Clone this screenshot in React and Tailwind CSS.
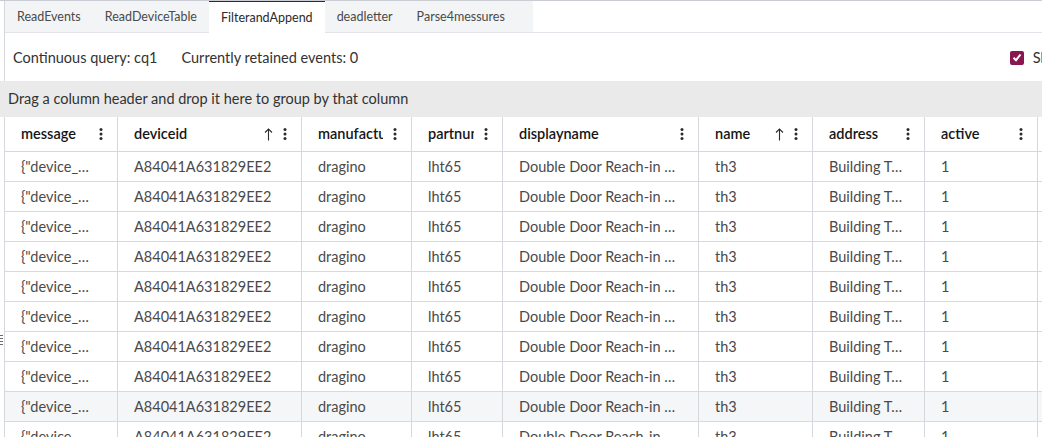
import React from "react";

const tabs = ["ReadEvents", "ReadDeviceTable", "FilterandAppend", "deadletter", "Parse4messures"];

const columns = [
  { key: "message", label: "message", w: "w-[113px]" },
  { key: "deviceid", label: "deviceid", w: "w-[184px]", sort: true },
  { key: "manufacturer", label: "manufacturer", w: "w-[110px]" },
  { key: "partnumber", label: "partnumber", w: "w-[91px]" },
  { key: "displayname", label: "displayname", w: "w-[196px]" },
  { key: "name", label: "name", w: "w-[114px]", sort: true },
  { key: "address", label: "address", w: "w-[112px]" },
  { key: "active", label: "active", w: "w-[113px]" },
];

const row = {
  message: "{\"device_…",
  deviceid: "A84041A631829EE2",
  manufacturer: "dragino",
  partnumber: "lht65",
  displayname: "Double Door Reach-in …",
  name: "th3",
  address: "Building T…",
  active: "1",
};

const rows = Array.from({ length: 10 }, () => row);

function Kebab() {
  return (
    <svg width="4" height="12" viewBox="0 0 4 12" className="shrink-0">
      <circle cx="2" cy="1.6" r="1.5" fill="#2b2b2b" />
      <circle cx="2" cy="6" r="1.5" fill="#2b2b2b" />
      <circle cx="2" cy="10.4" r="1.5" fill="#2b2b2b" />
    </svg>
  );
}

function ArrowUp() {
  return (
    <svg width="9" height="13" viewBox="0 0 9 13" className="shrink-0">
      <path d="M4.5 12.5V1M1 4.5L4.5 1L8 4.5" fill="none" stroke="#2b2b2b" strokeWidth="1.1" />
    </svg>
  );
}

export default function App() {
  return (
    <div className="relative w-[1042px] h-[437px] overflow-hidden bg-white text-[#323232] font-['Lato','Liberation_Sans',sans-serif] border-t border-[#c9cdd3]">
      {/* splitter grip */}
      <div className="absolute left-0 top-[334px] flex flex-col gap-[2px]">
        <div className="w-[3px] h-[1px] bg-[#6b6b6b]" />
        <div className="w-[3px] h-[1px] bg-[#6b6b6b]" />
        <div className="w-[3px] h-[1px] bg-[#6b6b6b]" />
        <div className="w-[3px] h-[1px] bg-[#6b6b6b]" />
      </div>

      <div className="pl-[4px]">
        <div className="border-l border-[#d4d7dc]">
          {/* tabs */}
          <div className="flex border-b border-[#e1e4e8] h-[32px]">
            <div className="flex bg-[#f3f4f6] w-[528px]">
              {tabs.map((t) => (
                <div
                  key={t}
                  className={
                    t === "FilterandAppend"
                      ? "px-[12px] pt-[1px] flex items-center text-[12.5px] text-[#2b2b2b] bg-white border-t border-[#2b2b2b] h-[33px]"
                      : "px-[12px] pt-[2px] flex items-center text-[12.5px] text-[#4a4a4a]"
                  }
                >
                  {t}
                </div>
              ))}
            </div>
          </div>

          {/* query info */}
          <div className="flex items-center h-[48px] pl-[8px] pt-[1px] text-[14.5px] text-[#323232]">
            <span>Continuous query: cq1</span>
            <span className="ml-[24px]">Currently retained events: 0</span>
            <div className="ml-auto flex items-center gap-[9px] mr-[-26px]">
              <div className="w-[14px] h-[14px] rounded-[2px] bg-[#8a1650] flex items-center justify-center">
                <svg width="10" height="9" viewBox="0 0 10 9">
                  <path d="M1.5 4.8L4 7.2L8.5 1.5" fill="none" stroke="white" strokeWidth="2" />
                </svg>
              </div>
              <span>Show</span>
            </div>
          </div>
        </div>
      </div>

      {/* group panel */}
      <div className="h-[36px] bg-[#ebeaea] flex items-center pl-[8px] text-[14.5px] text-[#323232]">
        Drag a column header and drop it here to group by that column
      </div>

      {/* grid */}
      <div className="pl-[4px]">
        <div className="border-l border-[#d4d7dc] text-[14.5px]">
          <div className="flex h-[35px] border-b border-[#d4d7dc]">
            {columns.map((c) => (
              <div
                key={c.key}
                className={`${c.w} shrink-0 border-r border-[#d4d7dc] flex items-center pl-[16px] pr-[14px] gap-[10px]`}
              >
                <span className="flex-1 overflow-hidden whitespace-nowrap font-semibold text-[#151515]">{c.label}</span>
                {c.sort && <ArrowUp />}
                <Kebab />
              </div>
            ))}
          </div>
          {rows.map((r, i) => (
            <div key={i} className={`flex h-[30px] border-b border-[#d6d9de] ${i === 8 ? "bg-[#f5f6f8]" : ""}`}>
              {columns.map((c) => (
                <div
                  key={c.key}
                  className={`${c.w} shrink-0 border-r border-[#d4d7dc] flex items-center pl-[16px] pr-[12px]`}
                >
                  <span className="truncate text-[#4a4a4a]">{r[c.key]}</span>
                </div>
              ))}
            </div>
          ))}
        </div>
      </div>
    </div>
  );
}
